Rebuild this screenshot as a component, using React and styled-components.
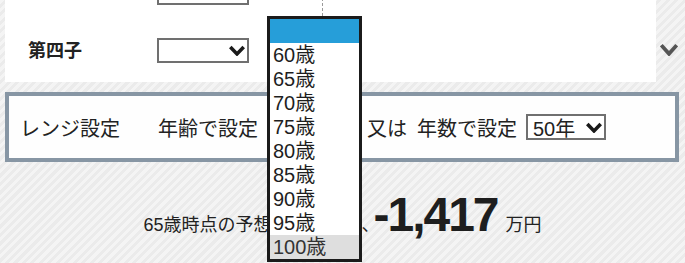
import React from "react";
import styled, { createGlobalStyle } from "styled-components";

const GlobalStyle = createGlobalStyle`
  html, body { margin: 0; padding: 0; }
  body {
    width: 685px;
    height: 263px;
    overflow: hidden;
    font-family: "Liberation Sans", "Noto Sans CJK JP", sans-serif;
    color: #222;
    background: repeating-linear-gradient(135deg, #f4f4f4 0 3px, #ebebeb 3px 6px);
  }
`;

const Page = styled.div`
  position: relative;
  width: 685px;
  height: 263px;
  overflow: hidden;
`;

const TopArea = styled.div`
  display: flex;
  height: 82px;
`;

const ChildPanel = styled.div`
  margin-left: 5px;
  width: 651px;
  background: #fff;
  overflow: hidden;
`;

const ChildList = styled.div`
  margin-top: -37px;
`;

const ChildRow = styled.div`
  display: grid;
  grid-template-columns: 129px 92px 73px 1fr;
  align-items: center;
  height: 58px;
  padding-left: 23px;
`;

const ChildLabel = styled.span`
  font-size: 18px;
  font-weight: 700;
  color: #222;
  margin-top: -3px;
`;

const DashedCell = styled.div`
  align-self: stretch;
  border-left: 1px dashed #9a9a9a;
`;

const SideBar = styled.div`
  flex: 1;
  display: flex;
  align-items: flex-start;
  padding: 43px 0 0 4px;
`;

const SelectBox = styled.div`
  box-sizing: border-box;
  display: inline-flex;
  align-items: center;
  justify-content: space-between;
  flex: none;
  width: ${(p) => p.$w}px;
  height: ${(p) => p.$h || 25}px;
  margin-left: ${(p) => p.$ml || 0}px;
  border: 2px solid #707070;
  background: #fff;
  padding: 0 2px 0 5px;
  font-size: 20px;
  color: #222;
`;

const RangePanel = styled.div`
  margin: 10px 6px 0 5px;
  height: 62px;
  border: 4px solid #8796a4;
  background: #fefefe;
  display: flex;
  align-items: center;
  padding-left: 11px;
  font-size: 20px;
  color: #222;
`;

const Text = styled.span`
  flex: none;
  margin-left: ${(p) => p.$ml || 0}px;
  white-space: nowrap;
`;

const Result = styled.div`
  display: flex;
  justify-content: center;
  align-items: baseline;
  padding-top: 29px;
  color: #222;
`;

const ResultLabel = styled.span`
  font-size: 18px;
  white-space: nowrap;
`;

const Amount = styled.span`
  font-size: 48px;
  font-weight: 700;
  letter-spacing: -2px;
  line-height: 48px;
  margin-left: -6px;
  color: #1e1e1e;
`;

const Unit = styled.span`
  font-size: 18px;
  margin-left: 8px;
`;

const ListBox = styled.ul`
  position: absolute;
  left: 267px;
  top: 16px;
  width: 95px;
  box-sizing: border-box;
  margin: 0;
  padding: 0;
  list-style: none;
  border: 3px solid #1b1b1b;
  background: #fff;
`;

const Option = styled.li`
  height: 24px;
  line-height: 24px;
  padding-left: 3px;
  font-size: 20px;
  color: ${(p) => (p.$hover ? "#333" : "#1e1e1e")};
  background: ${(p) => (p.$selected ? "#269ed9" : p.$hover ? "#dedede" : "#fff")};
  white-space: nowrap;
`;

const Chevron = ({ w = 16, h = 11, color = "#1a1a1a", sw = 3.6 }) => (
  <svg width={w} height={h} viewBox={`0 0 ${w} ${h}`} style={{ display: "block" }}>
    <path
      d={`M1.3 ${sw / 2 + 0.3} L${w / 2} ${h - sw / 2 - 0.3} L${w - 1.3} ${sw / 2 + 0.3}`}
      fill="none"
      stroke={color}
      strokeWidth={sw}
      strokeLinejoin="miter"
    />
  </svg>
);

const ages = ["60歳", "65歳", "70歳", "75歳", "80歳", "85歳", "90歳", "95歳", "100歳"];

export default function App() {
  return (
    <Page>
      <GlobalStyle />
      <TopArea>
        <ChildPanel>
          <ChildList>
            <ChildRow>
              <span />
              <SelectBox $w={92}>
                <span />
                <Chevron />
              </SelectBox>
              <span />
              <DashedCell />
            </ChildRow>
            <ChildRow>
              <ChildLabel>第四子</ChildLabel>
              <SelectBox $w={92}>
                <span />
                <Chevron />
              </SelectBox>
              <span />
              <DashedCell />
            </ChildRow>
          </ChildList>
        </ChildPanel>
        <SideBar>
          <Chevron w={18} h={13} color="#555" sw={3.8} />
        </SideBar>
      </TopArea>

      <RangePanel>
        <Text>レンジ設定</Text>
        <Text $ml={38}>年齢で設定</Text>
        <SelectBox $w={95} $h={26} $ml={9}>
          <span>65歳</span>
          <Chevron />
        </SelectBox>
        <Text $ml={5}>又は</Text>
        <Text $ml={10}>年数で設定</Text>
        <SelectBox $w={80} $h={26} $ml={9}>
          <span>50年</span>
          <Chevron />
        </SelectBox>
      </RangePanel>

      <Result>
        <ResultLabel>65歳時点の予想金融資産は、</ResultLabel>
        <Amount>-1,417</Amount>
        <Unit>万円</Unit>
      </Result>

      <ListBox>
        <Option $selected>&nbsp;</Option>
        {ages.map((a, i) => (
          <Option key={a} $hover={i === ages.length - 1}>
            {a}
          </Option>
        ))}
      </ListBox>
    </Page>
  );
}
